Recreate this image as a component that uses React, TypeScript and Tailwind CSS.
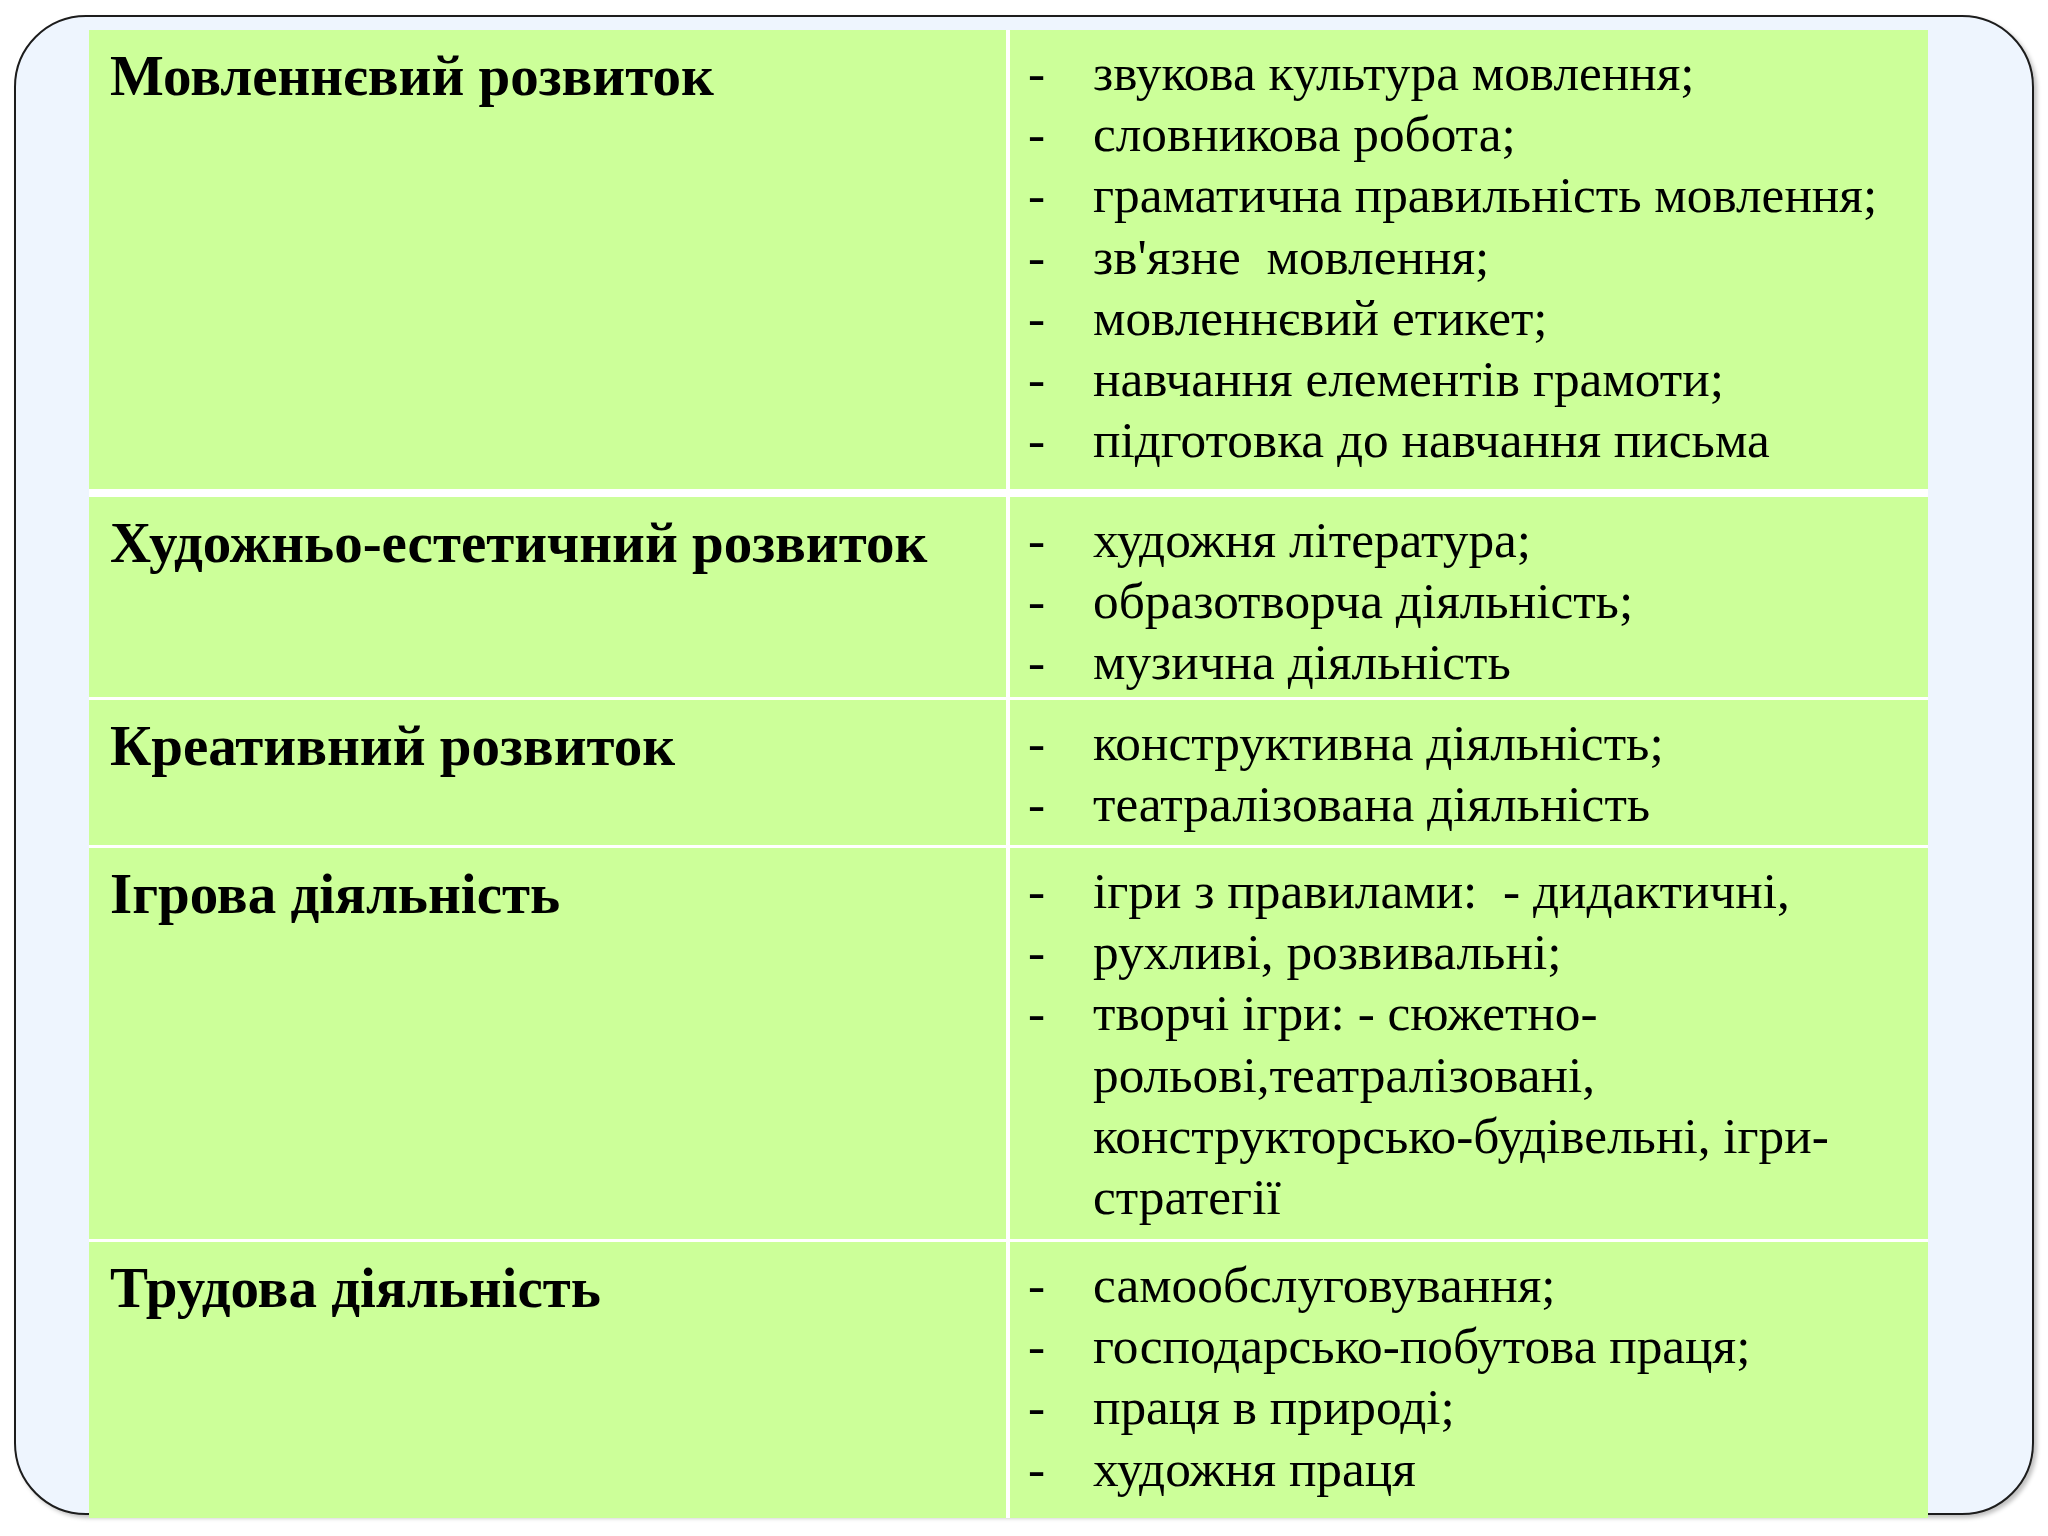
const rows = [
  {
    title: 'Мовленнєвий розвиток',
    height: 'h-[459px]',
    gap: 'mb-[8px]',
    items: [
      ['звукова культура мовлення;'],
      ['словникова робота;'],
      ['граматична правильність мовлення;'],
      ['зв\'язне\u00a0 мовлення;'],
      ['мовленнєвий етикет;'],
      ['навчання елементів грамоти;'],
      ['підготовка до навчання письма'],
    ],
  },
  {
    title: 'Художньо-естетичний розвиток',
    height: 'h-[200px]',
    gap: 'mb-[3px]',
    items: [['художня література;'], ['образотворча діяльність;'], ['музична діяльність']],
  },
  {
    title: 'Креативний розвиток',
    height: 'h-[145px]',
    gap: 'mb-[3px]',
    items: [['конструктивна діяльність;'], ['театралізована діяльність']],
  },
  {
    title: 'Ігрова діяльність',
    height: 'h-[391px]',
    gap: 'mb-[3px]',
    items: [
      ['ігри з правилами:\u00a0 - дидактичні,'],
      ['рухливі, розвивальні;'],
      ['творчі ігри: - сюжетно-', 'рольові,театралізовані,', 'конструкторсько-будівельні, ігри-', 'стратегії'],
    ],
  },
  {
    title: 'Трудова діяльність',
    height: 'h-[276px]',
    gap: '',
    items: [['самообслуговування;'], ['господарсько-побутова праця;'], ['праця в природі;'], ['художня праця']],
  },
]

export default function App() {
  return (
    <div
      className="w-[2048px] h-[1536px] overflow-hidden bg-white pt-[15px] pl-[14px]"
      style={{ fontFamily: '"Liberation Serif", "Times New Roman", serif' }}
    >
      <div className="w-[2020px] h-[1500px] rounded-[72px] border-2 border-[#1c1c1c] bg-[#eef5fe] pt-[13px] pl-[73px] shadow-[3px_3px_4px_rgba(0,0,0,0.25)]">
        <div className="w-[1839px] bg-white text-black">
          {rows.map((row) => (
            <div key={row.title} className={`grid grid-cols-[917px_918px] gap-x-[4px] ${row.height} ${row.gap}`}>
              <div className="bg-[#ccff99] pl-[21px] pt-[15px]">
                <div className="text-[57px] font-bold leading-[61px]">{row.title}</div>
              </div>
              <div className="bg-[#ccff99] pl-[18px] pt-[12px]">
                {row.items.map((lines, i) => (
                  <div key={i} className="grid grid-cols-[65px_1fr] text-[51.3px] leading-[61.2px]">
                    <span>-</span>
                    <div>
                      {lines.map((l) => (
                        <div key={l} className="whitespace-pre">{l}</div>
                      ))}
                    </div>
                  </div>
                ))}
              </div>
            </div>
          ))}
        </div>
      </div>
    </div>
  )
}
